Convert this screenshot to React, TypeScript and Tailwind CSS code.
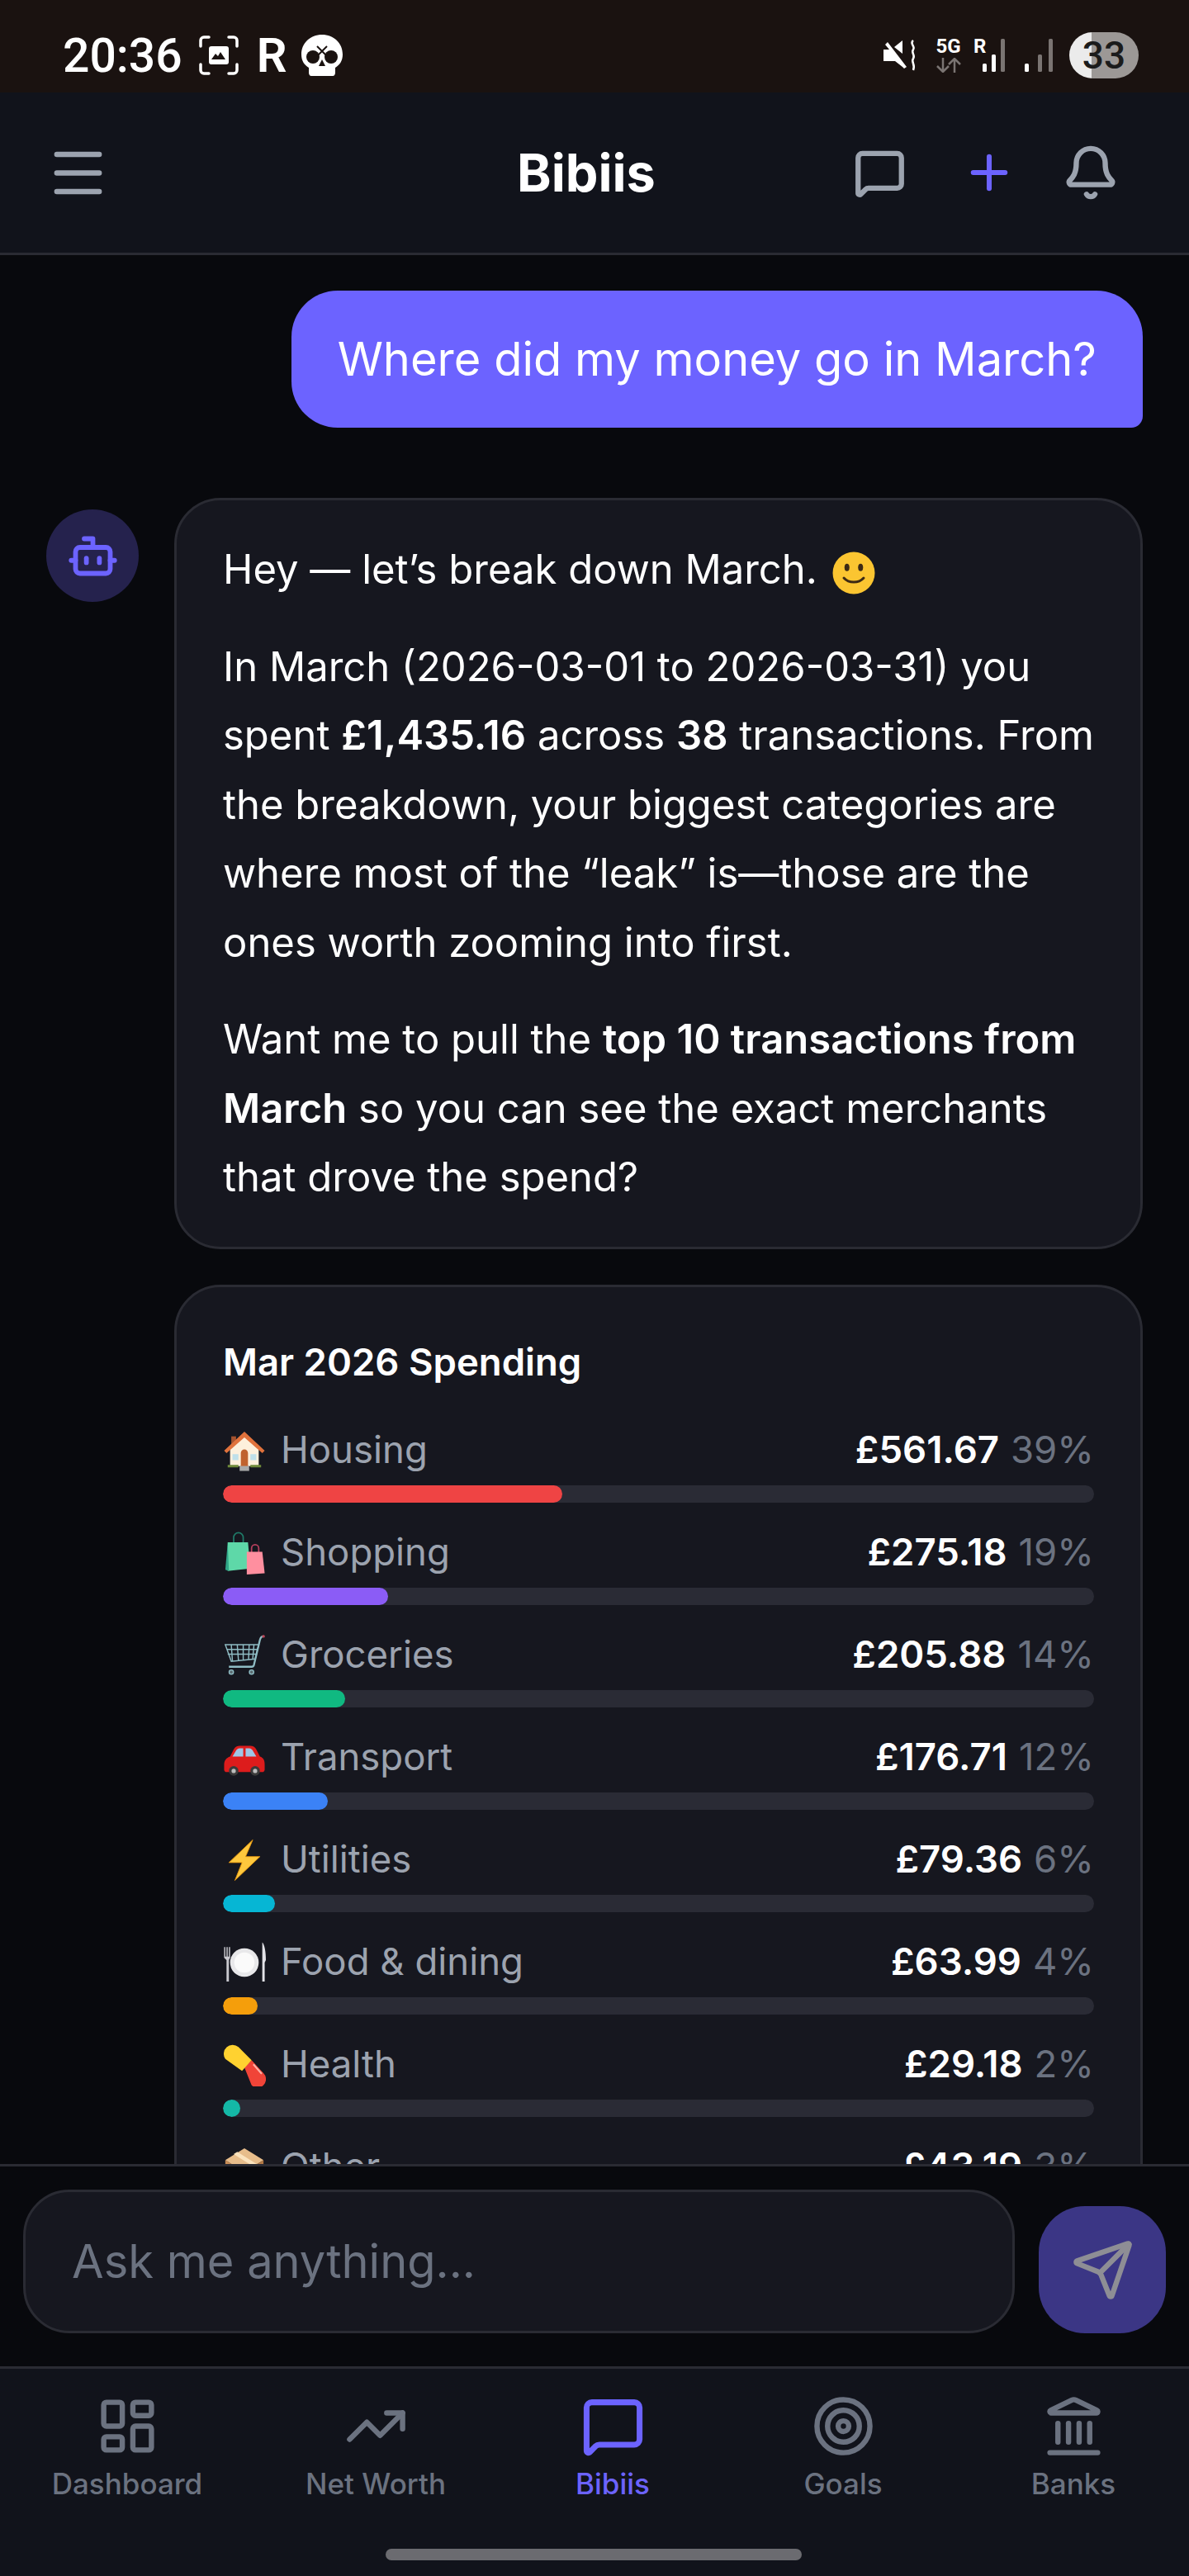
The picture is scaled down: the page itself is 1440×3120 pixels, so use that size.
import { Bell, Bot, Landmark, LayoutDashboard, Menu, MessageSquare, Plus, Send, Target, TrendingUp } from "lucide-react";
import type { ReactNode } from "react";

function HouseEmoji() {
  return (
    <svg viewBox="0 0 36 36" className="h-[52px] w-[52px]">
      <path fill="#a5532f" d="M7 6h4v9H7z" />
      <path fill="#fdf0dc" d="M6 17 18 6l12 11v14H6z" />
      <path fill="#e0723c" d="M18 2 1 18l2 2L18 7l15 13 2-2z" />
      <path fill="#c0622e" d="M15 20a3 3 0 0 1 6 0v11h-6z" />
      <path fill="#bfe0ea" d="M8 21h5v5H8zM23 21h5v5h-5z" />
      <path fill="#6f8a3a" d="M4 30h9v2H4zM23 30h9v2h-9z" />
      <path fill="#a9a9a9" d="M14 31h8v4h-8z" />
    </svg>
  );
}

function BagsEmoji() {
  return (
    <svg viewBox="0 0 36 36" className="h-[52px] w-[52px]">
      <path fill="none" stroke="#1f7a68" strokeWidth="1.2" d="M9 10V5a4 4 0 0 1 8 0v5" />
      <path fill="#5ed8a8" d="M4 9h17l2 22-19 2z" />
      <path fill="#2fa587" d="M4 9 2 32l3 1z" />
      <path fill="none" stroke="#b8405e" strokeWidth="1.2" d="M24 18v-4a3 3 0 0 1 6 0v4" />
      <path fill="#ff8f9f" d="M20 17h13l2 18-15 1z" />
    </svg>
  );
}

function CartEmoji() {
  return (
    <svg viewBox="0 0 36 36" className="h-[52px] w-[52px]" fill="none" stroke="#8fbcc4" strokeWidth="1">
      <path strokeWidth="1.6" d="M34 2c-2 0-2.500 1-3 3l-5 21c-.3 1-1 1.500-2 1.500H5" />
      <path d="M2 9h28l-3 12-20 2zM7 9l1 14M12 9l1 13M17 9v13M22 9l-.5 12M26 9l-1 12M3 13h26M4 17h24" />
      <circle cx="7" cy="32" r="1.800" fill="#5b6b70" />
      <circle cx="24" cy="32" r="1.800" fill="#5b6b70" />
      <circle cx="34" cy="2" r="1.200" fill="#c0485a" stroke="none" />
    </svg>
  );
}

function CarEmoji() {
  return (
    <svg viewBox="0 0 36 36" className="h-[52px] w-[52px]">
      <path fill="#dd1c1c" d="M1 24c0-4 2-6 5-7l3-6c1-2 3-3 5-3h9c2 0 4 1 5 3l3 6c3 1 4 3 4 7v4c0 1-1 2-2 2H3c-1 0-2-1-2-2z" />
      <path fill="#9fc6e6" d="M11 12c.5-1 1.500-2 3-2h3v7H8zM19 10h3c1.500 0 2.500 1 3 2l3 5h-9z" />
      <circle cx="9" cy="29" r="4" fill="#3a3a3a" />
      <circle cx="27" cy="29" r="4" fill="#3a3a3a" />
      <circle cx="9" cy="29" r="1.800" fill="#bcbcbc" />
      <circle cx="27" cy="29" r="1.800" fill="#bcbcbc" />
    </svg>
  );
}

function BoltEmoji() {
  return (
    <svg viewBox="0 0 36 36" className="h-[52px] w-[52px]">
      <path fill="#ffc83d" stroke="#e8960c" strokeWidth=".6" d="M25 1 5 20h11l-6 15 21-20H19z" />
    </svg>
  );
}

function PlateEmoji() {
  return (
    <svg viewBox="0 0 36 36" className="h-[52px] w-[52px]">
      <circle cx="18" cy="18" r="12" fill="#e8e8ea" />
      <circle cx="18" cy="18" r="8.500" fill="#fafafa" />
      <path fill="#c9c9cf" d="M1 5h1v8h1V5h1v8h1V5h1v9l-1 2v18H3V16l-2-2z" />
      <path fill="#e3e3e8" d="M33 1c2 2 3 8 3 15l-1 2v16h-2z" />
    </svg>
  );
}

function PillEmoji() {
  return (
    <svg viewBox="0 0 36 36" className="h-[52px] w-[52px]">
      <path fill="#f04438" d="m18 20 6-6 10 11a7 7 0 0 1-10 10z" />
      <path fill="#ffd230" d="M2 13a7.500 7.500 0 0 1 11-10l11 11-8 9z" />
      <path fill="#ffb3a8" d="m26 17 7 8-1 1-7-8z" />
    </svg>
  );
}

function BoxEmoji() {
  return (
    <svg viewBox="0 0 36 36" className="h-[52px] w-[52px]">
      <path fill="#e7bd8b" d="M18 2 34 12 18 22 2 12z" />
      <path fill="#fbe3bd" d="m9 7 16 10 3-2L12 5z" />
      <path fill="#c98d56" d="M2 12v15l16 8V22z" />
      <path fill="#b27844" d="M34 12v15l-16 8V22z" />
    </svg>
  );
}

function SmileEmoji() {
  return (
    <svg viewBox="0 0 36 36" className="mb-[-1px] ml-[3px] inline-block h-[54px] w-[54px]">
      <circle cx="18" cy="18" r="17" fill="#fbc531" />
      <ellipse cx="12.500" cy="13.500" rx="2" ry="3" fill="#3d2a14" />
      <ellipse cx="23.500" cy="13.500" rx="2" ry="3" fill="#3d2a14" />
      <path fill="none" stroke="#3d2a14" strokeWidth="2" strokeLinecap="round" d="M10 22c4 4.500 12 4.500 16 0" />
    </svg>
  );
}

const categories: { emoji: ReactNode; name: string; amount: string; pct: number; color: string }[] = [
  { emoji: <HouseEmoji />, name: "Housing", amount: "£561.67", pct: 39, color: "bg-[#ef4444]" },
  { emoji: <BagsEmoji />, name: "Shopping", amount: "£275.18", pct: 19, color: "bg-[#8b5cf6]" },
  { emoji: <CartEmoji />, name: "Groceries", amount: "£205.88", pct: 14, color: "bg-[#10b981]" },
  { emoji: <CarEmoji />, name: "Transport", amount: "£176.71", pct: 12, color: "bg-[#3b82f6]" },
  { emoji: <BoltEmoji />, name: "Utilities", amount: "£79.36", pct: 6, color: "bg-[#06b6d4]" },
  { emoji: <PlateEmoji />, name: "Food & dining", amount: "£63.99", pct: 4, color: "bg-[#f59e0b]" },
  { emoji: <PillEmoji />, name: "Health", amount: "£29.18", pct: 2, color: "bg-[#14b8a6]" },
  { emoji: <BoxEmoji />, name: "Other", amount: "£43.19", pct: 3, color: "bg-[#6b7280]" },
];

function StatusBar() {
  return (
    <div className="flex h-[112px] shrink-0 items-center justify-between bg-[#1a1210] pl-[76px] pr-[61px] pt-[22px] text-white">
      <div className="flex items-center">
        <span className="font-[Roboto,sans-serif] text-[57px] font-medium leading-none">20:36</span>
        <svg viewBox="0 0 48 48" className="ml-[20px] h-[48px] w-[48px]" fill="none" stroke="#fff" strokeWidth="3.500" strokeLinecap="round">
          <path d="M2 13V6a4 4 0 0 1 4-4h6M36 2h6a4 4 0 0 1 4 4v7M46 35v7a4 4 0 0 1-4 4h-6M12 46H6a4 4 0 0 1-4-4v-7" />
          <rect x="12" y="13" width="24" height="22" rx="3" fill="#fff" stroke="none" />
          <path d="m15 29 5-7 3 3 3-5 6 9z" fill="#1a1210" stroke="none" />
        </svg>
        <span className="ml-[22px] font-[Roboto,sans-serif] text-[58px] font-semibold leading-none">R</span>
        <svg viewBox="0 0 50 50" className="ml-[18px] h-[50px] w-[50px]">
          <path fill="#fff" d="M25 0c14 0 25 10 25 24 0 8-4 13-9 16v6c0 2-1 4-3 4H12c-2 0-3-2-3-4v-6C4 37 0 32 0 24 0 10 11 0 25 0z" />
          <circle cx="14" cy="27" r="8" fill="#1a1210" />
          <circle cx="36" cy="27" r="8" fill="#1a1210" />
          <path fill="#1a1210" d="m25 30 4 8h-8z" />
          <path stroke="#1a1210" strokeWidth="2" d="m19 14 12 12M31 14 19 26" />
        </svg>
      </div>
      <div className="flex items-center">
        <svg viewBox="0 0 40 40" className="h-[40px] w-[40px]">
          <path fill="#fff" d="M0 13h7L2 7l3-3 23 30-3 2-2-2-9-7H0zM13 10l10-8v16z" />
          <path fill="none" stroke="#fff" strokeWidth="2.500" d="M36 2c-5 4 3 7 0 11-3 4 3 7 0 11-3 4 3 7 0 14" />
        </svg>
        <div className="ml-[22px] flex w-[33px] flex-col items-center">
          <span className="font-[Roboto,sans-serif] text-[24px] font-bold leading-[20px]">5G</span>
          <svg viewBox="0 0 32 18" className="mt-[4px] h-[18px] w-[32px]" fill="none" stroke="#7a7472" strokeWidth="2.500">
            <path d="M9 0v16M2 10l7 7 7-7M23 18V2M16 8l7-7 7 7" />
          </svg>
        </div>
        <div className="relative ml-[14px] h-[40px] w-[43px]">
          <span className="absolute left-0 top-[-3px] font-[Roboto,sans-serif] text-[24px] font-bold leading-[24px]">R</span>
          <svg viewBox="0 0 37 40" className="absolute bottom-0 right-0 h-[40px] w-[37px]">
            <rect x="5" y="30" width="5" height="10" rx="1.500" fill="#fff" />
            <rect x="16" y="19" width="5" height="21" rx="1.500" fill="#fff" />
            <rect x="27" y="0" width="5" height="40" rx="1.500" fill="#7a7472" />
          </svg>
        </div>
        <svg viewBox="0 0 37 40" className="ml-[19px] h-[40px] w-[37px]">
          <rect x="0" y="30" width="5" height="10" rx="1.500" fill="#fff" />
          <rect x="16" y="19" width="5" height="21" rx="1.500" fill="#7a7472" />
          <rect x="29" y="0" width="5" height="40" rx="1.500" fill="#7a7472" />
        </svg>
        <div className="ml-[17px] flex h-[56px] w-[84px] items-center justify-center rounded-full bg-[linear-gradient(to_right,#ebebeb_32%,#9c9896_32%)] font-[Roboto,sans-serif] text-[46px] font-medium leading-none text-[#1b1b1b]">
          33
        </div>
      </div>
    </div>
  );
}

function Header() {
  return (
    <header className="flex h-[197px] shrink-0 items-center border-b-[3px] border-[#2a2b33] bg-[#11131b] pl-[56px] pr-[84px]">
      <div className="w-[570px]">
        <Menu size={77} strokeWidth={2} className="text-[#9ca3af]" />
      </div>
      <h1 className="text-[63px] font-bold text-white">Bibiis</h1>
      <div className="ml-auto flex items-center">
        <MessageSquare size={63} strokeWidth={2.4} className="text-[#9ca3af]" />
        <Plus size={66} strokeWidth={2.2} className="ml-[68px] text-[#6c63ff]" />
        <Bell size={70} strokeWidth={2.2} className="ml-[55px] text-[#9ca3af]" />
      </div>
    </header>
  );
}

function SpendingCard() {
  return (
    <div className="mt-[43px] rounded-[56px] border-[3px] border-[#2a2b33] bg-[#16171f] px-[56px] pt-[56px]">
      <div className="mb-[37px] text-[45.5px] font-semibold leading-[70px] text-white">Mar 2026 Spending</div>
      {categories.map((c) => (
        <div key={c.name} className="mb-[26px]">
          <div className="flex h-[70px] items-center justify-between text-[45.5px]">
            <span className="flex items-center gap-[18px] text-[#9ca3af]">
              {c.emoji}
              {c.name}
            </span>
            <span className="flex items-center gap-[14px]">
              <span className="font-semibold text-white">{c.amount}</span>
              <span className="text-[#6b7280]">{c.pct}%</span>
            </span>
          </div>
          <div className="mt-[7px] h-[21px] overflow-hidden rounded-full bg-[#2a2b35]">
            <div className={`h-full rounded-full ${c.color}`} style={{ width: `${c.pct}%` }} />
          </div>
        </div>
      ))}
    </div>
  );
}

function Messages() {
  return (
    <main className="min-h-0 flex-1 overflow-hidden bg-[#08090d] px-[56px] pt-[43px]">
      <div className="flex justify-end">
        <div className="rounded-[56px] rounded-br-[14px] bg-[#6c63ff] px-[56px] py-[41px] text-[56px] leading-[84px] text-white">
          Where did my money go in March?
        </div>
      </div>
      <div className="mt-[85px] flex gap-[43px]">
        <div className="mt-[14px] flex h-[112px] w-[112px] shrink-0 items-center justify-center rounded-full bg-[#25224d]">
          <Bot size={63} strokeWidth={2.2} className="text-[#6c63ff]" />
        </div>
        <div className="min-w-0 flex-1">
          <div className="rounded-[56px] border-[3px] border-[#2a2b33] bg-[#16171f] py-[42px] pl-[56px] pr-[44px] text-[49px] leading-[83.5px] text-white">
            <p>
              Hey — let’s break down March. <SmileEmoji />
            </p>
            <p className="mt-[34px]">
              In March (2026-03-01 to 2026-03-31) you spent <strong className="font-semibold">£1,435.16</strong> across{" "}
              <strong className="font-semibold">38</strong> transactions. From the breakdown, your biggest categories are where most of the “leak” is—those are the ones worth zooming into first.
            </p>
            <p className="mt-[34px]">
              Want me to pull the <strong className="font-semibold">top 10 transactions from March</strong> so you can see the exact merchants that drove the spend?
            </p>
          </div>
          <SpendingCard />
        </div>
      </div>
    </main>
  );
}

function Composer() {
  return (
    <div className="flex h-[245px] shrink-0 items-start border-t-[3px] border-[#2a2b33] bg-[#08090d] pl-[28px] pr-[28px] pt-[28px]">
      <input
        readOnly
        placeholder="Ask me anything..."
        className="h-[174px] w-[1201px] rounded-[56px] border-[3px] border-[#2a2b33] bg-[#16171f] px-[56px] text-[56px] text-white outline-none placeholder:text-[#6b7280]"
      />
      <button className="ml-[29px] mt-[20px] flex h-[154px] w-[154px] items-center justify-center rounded-[56px] bg-[#3b3685]">
        <Send size={77} strokeWidth={2} className="text-[#8e8e95]" />
      </button>
    </div>
  );
}

const navItems = [
  { label: "Dashboard", icon: <LayoutDashboard size={77} strokeWidth={2} />, width: "w-[308px]", color: "text-[#6b7280]" },
  { label: "Net Worth", icon: <TrendingUp size={77} strokeWidth={2} />, width: "w-[294px]", color: "text-[#6b7280]" },
  { label: "Bibiis", icon: <MessageSquare size={77} strokeWidth={2.2} />, width: "w-[280px]", color: "text-[#6c63ff]" },
  { label: "Goals", icon: <Target size={77} strokeWidth={2} />, width: "w-[278px]", color: "text-[#6b7280]" },
  { label: "Banks", icon: <Landmark size={77} strokeWidth={2} />, width: "w-[280px]", color: "text-[#6b7280]" },
];

function BottomNav() {
  return (
    <nav className="relative h-[254px] shrink-0 border-t-[3px] border-[#2a2b33] bg-[#11131b]">
      <div className="flex pt-[27px]">
        {navItems.map((item) => (
          <div key={item.label} className={`flex flex-col items-center ${item.width} ${item.color}`}>
            <div className="flex h-[84px] items-center justify-center">{item.icon}</div>
            <span className="mt-[5px] text-[35px] font-medium leading-[46px]">{item.label}</span>
          </div>
        ))}
      </div>
      <div className="absolute bottom-[19px] left-[467px] h-[14px] w-[504px] rounded-full bg-[#6b6b70]" />
    </nav>
  );
}

export default function App() {
  return (
    <div className="flex h-[3120px] w-[1440px] flex-col overflow-hidden bg-[#08090d] font-[Inter,sans-serif]">
      <StatusBar />
      <Header />
      <Messages />
      <Composer />
      <BottomNav />
    </div>
  );
}
